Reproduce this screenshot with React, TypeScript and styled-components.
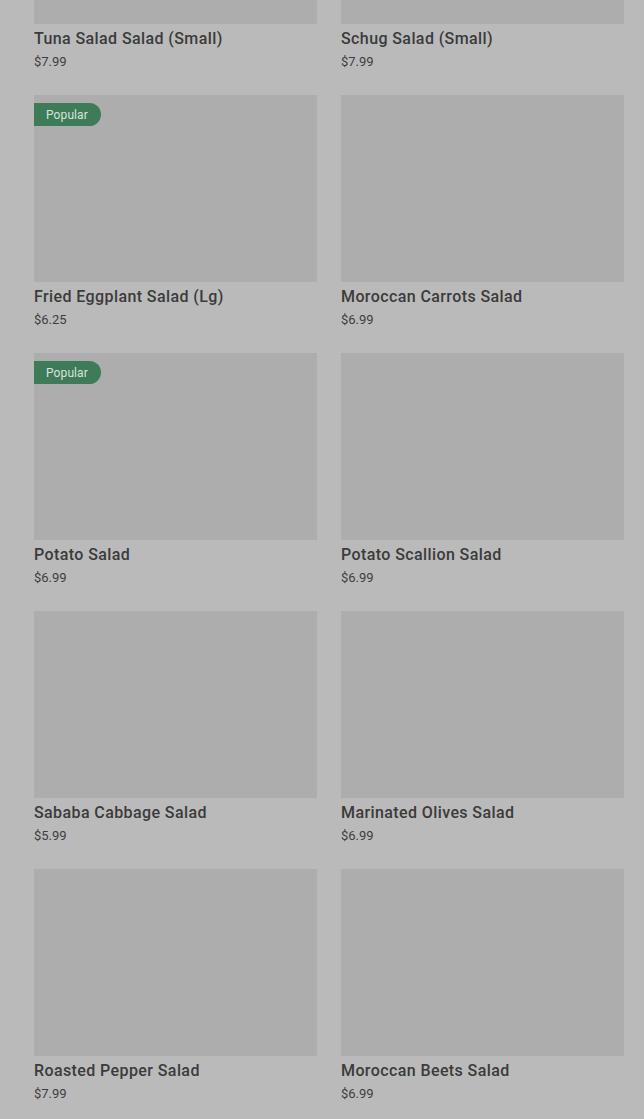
import React from "react";
import styled, { createGlobalStyle } from "styled-components";

const Global = createGlobalStyle`
  html, body { margin: 0; padding: 0; background: #bababa; overflow: hidden; }
  body { font-family: Roboto, "Noto Sans", Arial, sans-serif; }
`;

const Page = styled.div`
  height: 1119px;
  overflow: hidden;
  background: #bababa;
`;

const Grid = styled.div`
  display: grid;
  grid-template-columns: 283px 283px;
  column-gap: 24px;
  row-gap: 24px;
  padding: 0 20px 0 34px;
  margin-top: -163px;
`;

const Card = styled.div`
  display: flex;
  flex-direction: column;
`;

const ImageBox = styled.div`
  position: relative;
  height: 187px;
  background: #adadad;
`;

const Badge = styled.span`
  position: absolute;
  top: 8px;
  left: 0;
  height: 23px;
  padding: 0 13px 0 12px;
  display: flex;
  align-items: center;
  background: #3e7c59;
  color: #d6e4da;
  font-size: 12px;
  letter-spacing: 0.1px;
  border-radius: 0 12px 12px 0;
`;

const Info = styled.div`
  padding-top: 5px;
`;

const Title = styled.div`
  font-size: 16px;
  line-height: 20px;
  font-weight: 500;
  color: #3b3b3b;
  letter-spacing: 0.4px;
`;

const Price = styled.div`
  margin-top: 4px;
  font-size: 13px;
  line-height: 18px;
  color: #3e3e3e;
`;

const items: { name: string; price: string; popular?: boolean }[] = [
  { name: "Tuna Salad Salad (Small)", price: "$7.99" },
  { name: "Schug Salad (Small)", price: "$7.99" },
  { name: "Fried Eggplant Salad (Lg)", price: "$6.25", popular: true },
  { name: "Moroccan Carrots Salad", price: "$6.99" },
  { name: "Potato Salad", price: "$6.99", popular: true },
  { name: "Potato Scallion Salad", price: "$6.99" },
  { name: "Sababa Cabbage Salad", price: "$5.99" },
  { name: "Marinated Olives Salad", price: "$6.99" },
  { name: "Roasted Pepper Salad", price: "$7.99" },
  { name: "Moroccan Beets Salad", price: "$6.99" },
];

export default function App() {
  return (
    <Page>
      <Global />
      <Grid>
        {items.map((it) => (
          <Card key={it.name}>
            <ImageBox>{it.popular && <Badge>Popular</Badge>}</ImageBox>
            <Info>
              <Title>{it.name}</Title>
              <Price>{it.price}</Price>
            </Info>
          </Card>
        ))}
      </Grid>
    </Page>
  );
}
